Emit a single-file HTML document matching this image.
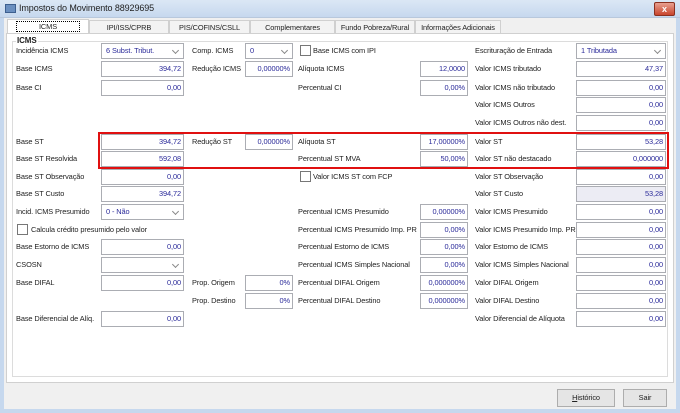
<!DOCTYPE html>
<html><head><meta charset="utf-8"><style>
*{box-sizing:border-box;margin:0;padding:0}
body{width:680px;height:413px;background:#f0f0f0;font-family:"Liberation Sans",sans-serif;font-size:7.4px;letter-spacing:-0.1px;color:#222;position:relative;overflow:hidden}
.a{position:absolute;white-space:nowrap}
.l{position:absolute;white-space:nowrap;line-height:10px}
.i{position:absolute;height:16px;background:#fff;border:1px solid #abadb3;color:#2b2b9a;text-align:right;padding-right:2px;line-height:14px}
.g{background:#ececf4}
.s{text-align:left;padding-left:4px}
.s:after{content:"";position:absolute;right:5px;top:4px;width:4px;height:4px;border-right:1px solid #888;border-bottom:1px solid #888;transform:rotate(45deg)}
.cb{position:absolute;width:11px;height:11px;border:1px solid #777;background:#fff}
.tab{position:absolute;top:20px;height:14px;border:1px solid #d0d0d0;border-bottom:none;background:#f3f3f3;text-align:center;line-height:13px;overflow:hidden}
.btn{position:absolute;top:389px;height:18px;background:#e5e5e5;border:1px solid #adadad;text-align:center;line-height:16px}
</style></head><body>
<div class="a" style="left:0;top:0;width:680px;height:18px;background:linear-gradient(#dbe7f5,#c6d8ee);border-bottom:1px solid #b8c8dc"></div>
<div class="a" style="left:5px;top:4px;width:11px;height:9px;background:#6a8fc0;border:1px solid #3d5f8f"></div>
<div class="a" style="left:19px;top:3px;font-size:9px;color:#222">Impostos do Movimento 88929695</div>
<div class="a" style="left:654px;top:2px;width:21px;height:14px;background:linear-gradient(#e8a090,#c8452e);border:1px solid #8a3020;border-radius:2px;color:#fff;text-align:center;font-weight:bold;font-size:9px;line-height:12px">x</div>
<div class="a" style="left:0;top:18px;width:4px;height:395px;background:#c6d8ee"></div>
<div class="a" style="left:676px;top:18px;width:4px;height:395px;background:#c6d8ee"></div>
<div class="a" style="left:0;top:409px;width:680px;height:4px;background:#c6d8ee"></div>

<div class="tab" style="left:7px;width:82px;background:#fff;top:19px;height:15px"><span style="border:1px dotted #000;padding:0 22px">ICMS</span></div>
<div class="tab" style="left:89px;width:80px">IPI/ISS/CPRB</div>
<div class="tab" style="left:169px;width:81px">PIS/COFINS/CSLL</div>
<div class="tab" style="left:250px;width:85px">Complementares</div>
<div class="tab" style="left:335px;width:80px">Fundo Pobreza/Rural</div>
<div class="tab" style="left:415px;width:86px">Informações Adicionais</div>
<div class="a" style="left:6px;top:33px;width:668px;height:350px;background:#fff;border:1px solid #d0d0d0"></div>
<div class="a" style="left:12px;top:41px;width:656px;height:336px;border:1px solid #dcdcdc"></div>
<div class="a" style="left:16px;top:36px;background:#fff;padding:0 1px;font-weight:bold;font-size:8px">ICMS</div>

<div class="l" style="left:16px;top:46px">Incidência ICMS</div><div class="i s" style="left:101px;top:43px;width:83px">6 Subst. Tribut.</div>
<div class="l" style="left:16px;top:64px">Base ICMS</div><div class="i" style="left:101px;top:61px;width:83px">394,72</div>
<div class="l" style="left:16px;top:83px">Base CI</div><div class="i" style="left:101px;top:80px;width:83px">0,00</div>
<div class="l" style="left:16px;top:137px">Base ST</div><div class="i" style="left:101px;top:134px;width:83px">394,72</div>
<div class="l" style="left:16px;top:154px">Base ST Resolvida</div><div class="i" style="left:101px;top:151px;width:83px">592,08</div>
<div class="l" style="left:16px;top:172px">Base ST Observação</div><div class="i" style="left:101px;top:169px;width:83px">0,00</div>
<div class="l" style="left:16px;top:189px">Base ST Custo</div><div class="i" style="left:101px;top:186px;width:83px">394,72</div>
<div class="l" style="left:16px;top:207px">Incid. ICMS Presumido</div><div class="i s" style="left:101px;top:204px;width:83px">0 - Não</div>
<div class="cb" style="left:17px;top:224px"></div><div class="l" style="left:31px;top:225px">Calcula crédito presumido pelo valor</div>
<div class="l" style="left:16px;top:242px">Base Estorno de ICMS</div><div class="i" style="left:101px;top:239px;width:83px">0,00</div>
<div class="l" style="left:16px;top:260px">CSOSN</div><div class="i s" style="left:101px;top:257px;width:83px"></div>
<div class="l" style="left:16px;top:278px">Base DIFAL</div><div class="i" style="left:101px;top:275px;width:83px">0,00</div>
<div class="l" style="left:16px;top:314px">Base Diferencial de Alíq.</div><div class="i" style="left:101px;top:311px;width:83px">0,00</div>

<div class="l" style="left:192px;top:46px">Comp. ICMS</div><div class="i s" style="left:245px;top:43px;width:48px">0</div>
<div class="l" style="left:192px;top:64px">Redução ICMS</div><div class="i" style="left:245px;top:61px;width:48px">0,00000%</div>
<div class="l" style="left:192px;top:137px">Redução ST</div><div class="i" style="left:245px;top:134px;width:48px">0,00000%</div>
<div class="l" style="left:192px;top:278px">Prop. Origem</div><div class="i" style="left:245px;top:275px;width:48px">0%</div>
<div class="l" style="left:192px;top:296px">Prop. Destino</div><div class="i" style="left:245px;top:293px;width:48px">0%</div>

<div class="cb" style="left:300px;top:45px"></div><div class="l" style="left:313px;top:46px">Base ICMS com IPI</div>
<div class="l" style="left:298px;top:64px">Alíquota ICMS</div><div class="i" style="left:420px;top:61px;width:48px">12,0000</div>
<div class="l" style="left:298px;top:83px">Percentual CI</div><div class="i" style="left:420px;top:80px;width:48px">0,00%</div>
<div class="l" style="left:298px;top:137px">Alíquota ST</div><div class="i" style="left:420px;top:134px;width:48px">17,00000%</div>
<div class="l" style="left:298px;top:154px">Percentual ST MVA</div><div class="i" style="left:420px;top:151px;width:48px">50,00%</div>
<div class="cb" style="left:300px;top:171px"></div><div class="l" style="left:313px;top:172px">Valor ICMS ST com FCP</div>
<div class="l" style="left:298px;top:207px">Percentual ICMS Presumido</div><div class="i" style="left:420px;top:204px;width:48px">0,00000%</div>
<div class="l" style="left:298px;top:225px">Percentual ICMS Presumido Imp. PR</div><div class="i" style="left:420px;top:222px;width:48px">0,00%</div>
<div class="l" style="left:298px;top:242px">Percentual Estorno de ICMS</div><div class="i" style="left:420px;top:239px;width:48px">0,00%</div>
<div class="l" style="left:298px;top:260px">Percentual ICMS Simples Nacional</div><div class="i" style="left:420px;top:257px;width:48px">0,00%</div>
<div class="l" style="left:298px;top:278px">Percentual DIFAL Origem</div><div class="i" style="left:420px;top:275px;width:48px">0,000000%</div>
<div class="l" style="left:298px;top:296px">Percentual DIFAL Destino</div><div class="i" style="left:420px;top:293px;width:48px">0,000000%</div>

<div class="l" style="left:475px;top:46px">Escrituração de Entrada</div><div class="i s" style="left:576px;top:43px;width:90px">1 Tributada</div>
<div class="l" style="left:475px;top:64px">Valor ICMS tributado</div><div class="i" style="left:576px;top:61px;width:90px">47,37</div>
<div class="l" style="left:475px;top:83px">Valor ICMS não tributado</div><div class="i" style="left:576px;top:80px;width:90px">0,00</div>
<div class="l" style="left:475px;top:100px">Valor ICMS Outros</div><div class="i" style="left:576px;top:97px;width:90px">0,00</div>
<div class="l" style="left:475px;top:118px">Valor ICMS Outros não dest.</div><div class="i" style="left:576px;top:115px;width:90px">0,00</div>
<div class="l" style="left:475px;top:137px">Valor ST</div><div class="i" style="left:576px;top:134px;width:90px">53,28</div>
<div class="l" style="left:475px;top:154px">Valor ST não destacado</div><div class="i" style="left:576px;top:151px;width:90px">0,000000</div>
<div class="l" style="left:475px;top:172px">Valor ST Observação</div><div class="i" style="left:576px;top:169px;width:90px">0,00</div>
<div class="l" style="left:475px;top:189px">Valor ST Custo</div><div class="i g" style="left:576px;top:186px;width:90px">53,28</div>
<div class="l" style="left:475px;top:207px">Valor ICMS Presumido</div><div class="i" style="left:576px;top:204px;width:90px">0,00</div>
<div class="l" style="left:475px;top:225px">Valor ICMS Presumido Imp. PR</div><div class="i" style="left:576px;top:222px;width:90px">0,00</div>
<div class="l" style="left:475px;top:242px">Valor Estorno de ICMS</div><div class="i" style="left:576px;top:239px;width:90px">0,00</div>
<div class="l" style="left:475px;top:260px">Valor ICMS Simples Nacional</div><div class="i" style="left:576px;top:257px;width:90px">0,00</div>
<div class="l" style="left:475px;top:278px">Valor DIFAL Origem</div><div class="i" style="left:576px;top:275px;width:90px">0,00</div>
<div class="l" style="left:475px;top:296px">Valor DIFAL Destino</div><div class="i" style="left:576px;top:293px;width:90px">0,00</div>
<div class="l" style="left:475px;top:314px">Valor Diferencial de Alíquota</div><div class="i" style="left:576px;top:311px;width:90px">0,00</div>

<div class="a" style="left:98px;top:132px;width:571px;height:37px;border:2px solid #e01010"></div>

<div class="btn" style="left:557px;width:58px"><u>H</u>istórico</div>
<div class="btn" style="left:623px;width:44px">Sair</div>
</body></html>
